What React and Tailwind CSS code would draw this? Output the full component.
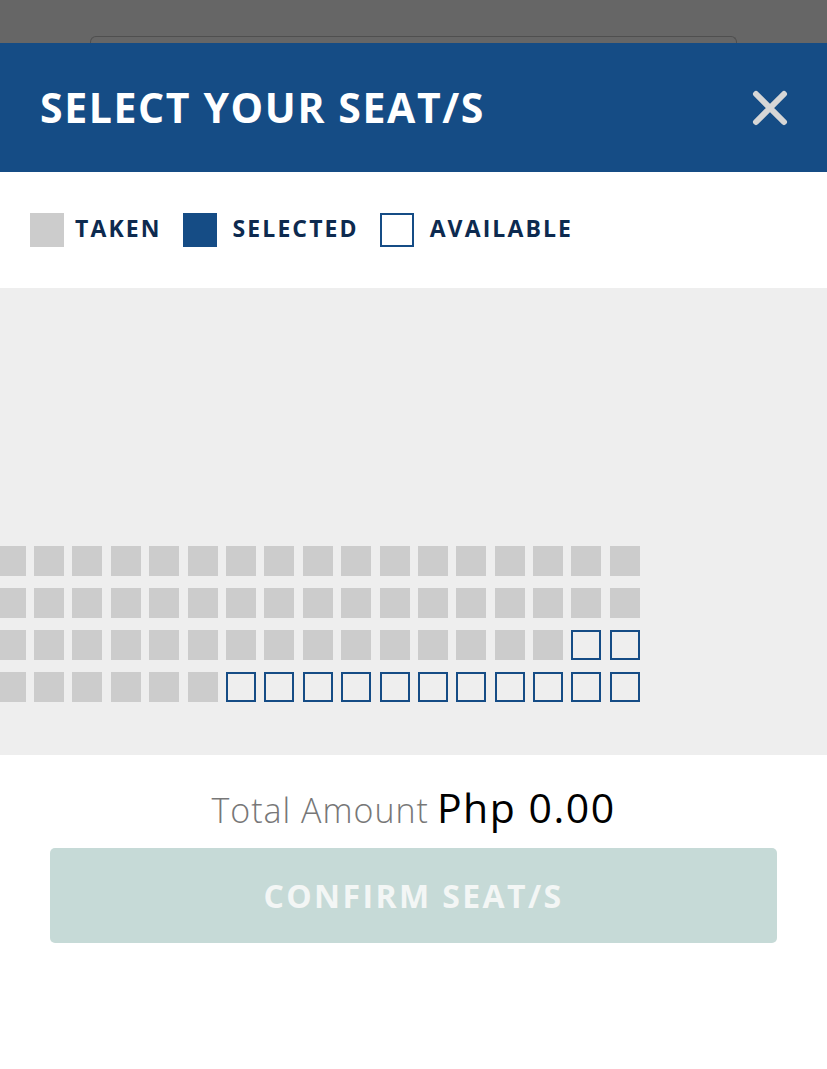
const TAKEN = "taken";
const AVAIL = "available";

function buildRows() {
  const n = 17;
  const rows = [];
  rows.push(Array(n).fill(TAKEN));
  rows.push(Array(n).fill(TAKEN));
  rows.push(Array(n).fill(TAKEN).map((s, i) => (i >= 15 ? AVAIL : s)));
  rows.push(Array(n).fill(TAKEN).map((s, i) => (i >= 6 ? AVAIL : s)));
  return rows;
}

function Seat({ status }) {
  if (status === AVAIL) {
    return <div className="w-[30px] h-[30px] shrink-0 border-2 border-[#154c85]" />;
  }
  return <div className="w-[30px] h-[30px] shrink-0 bg-[#cccccc]" />;
}

function LegendItem({ box, label, gap }) {
  return (
    <div className="flex items-center">
      {box}
      <span className={`${gap} mr-[21px] mb-[3px] text-[23px] font-bold text-[#0d2a4f] tracking-[2.1px] leading-none`}>{label}</span>
    </div>
  );
}

export default function App() {
  const rows = buildRows();
  return (
    <div
      className="w-[827px] h-[1069px] bg-white overflow-hidden flex flex-col"
      style={{ fontFamily: "'Open Sans', 'Liberation Sans', sans-serif" }}
    >
      <div className="h-[43px] shrink-0 bg-[#666666] px-[90px] pt-[36px]">
        <div className="h-[7px] rounded-t-[6px] border border-b-0 border-[#4f4f4f]" />
      </div>

      <div className="h-[129px] shrink-0 bg-[#154c85] flex items-center justify-between pl-[40px] pr-[38px]">
        <h1 className="text-[41px] font-bold text-white leading-none tracking-[1.6px]">SELECT YOUR SEAT/S</h1>
        <svg width="38" height="38" viewBox="0 0 38 38">
          <path d="M5 5 L33 33 M33 5 L5 33" stroke="#d6d6d6" strokeWidth="6" strokeLinecap="round" />
        </svg>
      </div>

      <div className="h-[116px] shrink-0 flex items-center pl-[30px]">
        <LegendItem gap="ml-[11px]" box={<div className="w-[34px] h-[34px] bg-[#cccccc]" />} label="TAKEN" />
        <LegendItem gap="ml-[16px]" box={<div className="w-[34px] h-[34px] bg-[#154c85]" />} label="SELECTED" />
        <LegendItem gap="ml-[16px]" box={<div className="w-[34px] h-[34px] border-2 border-[#154c85]" />} label="AVAILABLE" />
      </div>

      <div className="h-[467px] shrink-0 bg-[#eeeeee] flex flex-col justify-end pb-[53px] overflow-hidden">
        <div className="flex flex-col gap-[12px] ml-[-4.4px]">
          {rows.map((row, r) => (
            <div key={r} className="flex gap-[8.4px]">
              {row.map((s, i) => (
                <Seat key={i} status={s} />
              ))}
            </div>
          ))}
        </div>
      </div>

      <div className="flex justify-center items-baseline mt-[22px] h-[58px]">
        <span className="text-[34px] font-light text-[#777777] tracking-[1px]">Total Amount</span>
        <span className="ml-[8px] text-[41px] text-black tracking-[1.5px]">Php 0.00</span>
      </div>

      <div className="mx-[50px] mt-[13px] h-[95px] rounded-[5px] bg-[#c6dad7] flex items-center justify-center">
        <span className="text-[32px] font-bold text-[#f3f6f5] tracking-[2.4px]">CONFIRM SEAT/S</span>
      </div>
    </div>
  );
}
